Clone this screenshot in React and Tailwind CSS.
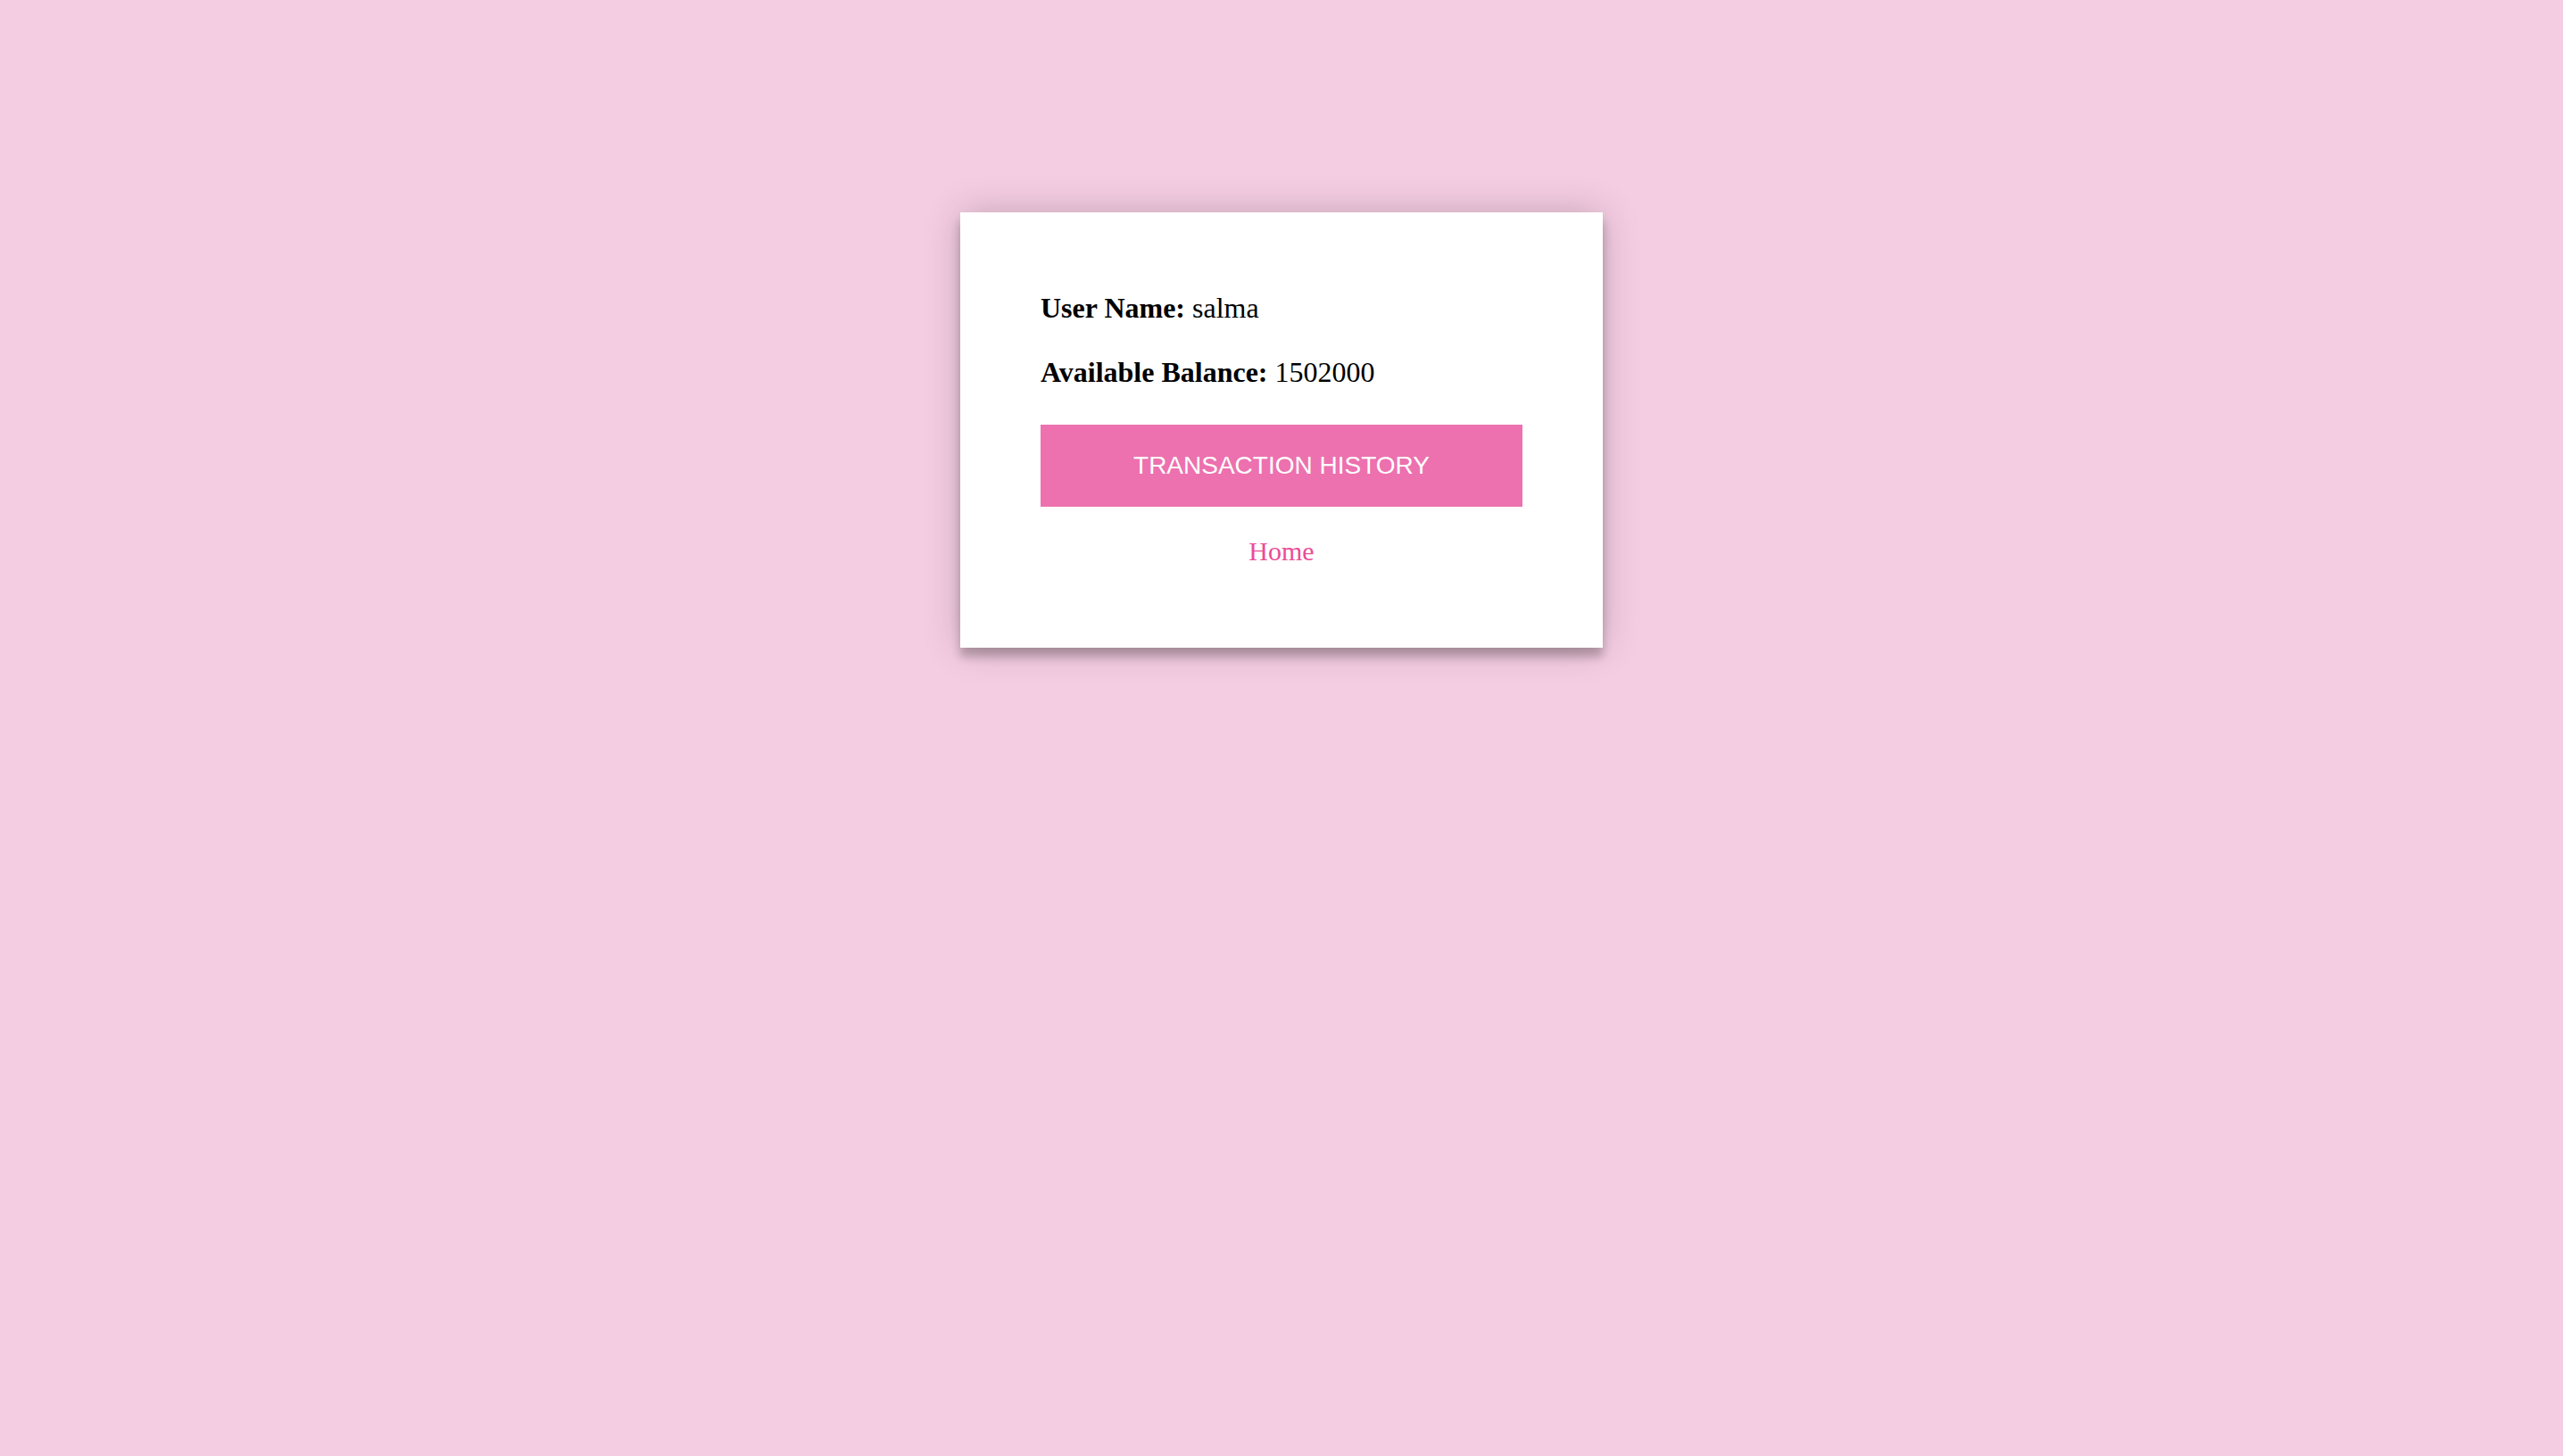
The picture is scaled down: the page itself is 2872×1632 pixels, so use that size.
export default function App() {
  return (
    <main className="min-h-screen bg-[#f5cde3] pt-[238px] font-['Liberation_Serif',serif] text-black">
      <section className="mx-auto w-full max-w-[720px] bg-white p-[90px] shadow-[0_0_40px_0_rgba(0,0,0,0.2),0_10px_10px_0_rgba(0,0,0,0.24)]">
        <p className="mb-[38px] text-[32px] leading-[34px]"><b>User Name:</b> salma</p>
        <p className="mb-[42px] text-[32px] leading-[34px]"><b>Available Balance:</b> 1502000</p>
        <button type="button" className="block w-full bg-[#ec71ae] p-[30px] font-['Liberation_Sans',sans-serif] text-[28px] leading-8 text-white uppercase">Transaction History</button>
        <p className="mt-8 text-center text-[30px] leading-9">
          <a href="#home" className="text-[#ea4c97]">Home</a>
        </p>
      </section>
    </main>
  );
}
